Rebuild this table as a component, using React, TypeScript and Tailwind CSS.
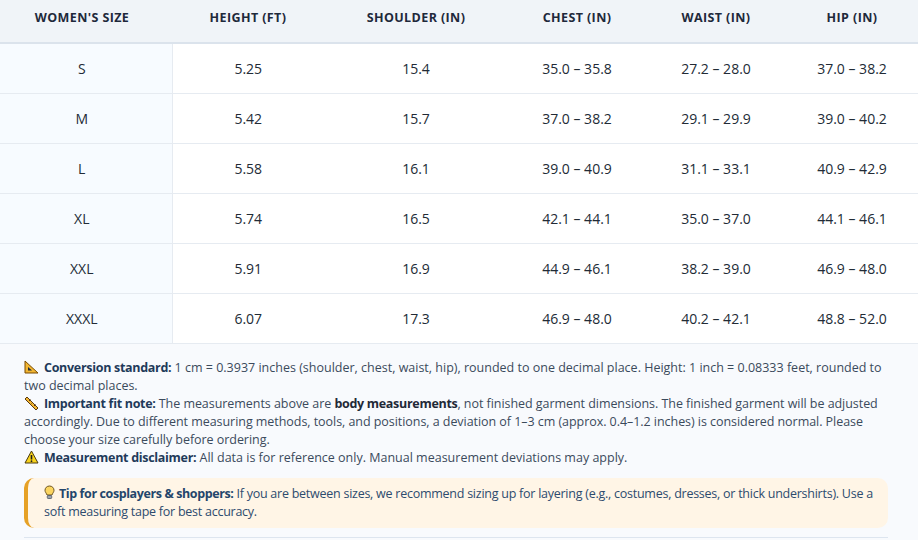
const columns = [
  { label: "Women's Size", width: "w-[172px]" },
  { label: "Height (ft)", width: "w-[152px]" },
  { label: "Shoulder (in)", width: "w-[184px]" },
  { label: "Chest (in)", width: "w-[138px]" },
  { label: "Waist (in)", width: "w-[140px]" },
  { label: "Hip (in)", width: "w-[132px]" },
];

const rows = [
  ["S", "5.25", "15.4", "35.0 – 35.8", "27.2 – 28.0", "37.0 – 38.2"],
  ["M", "5.42", "15.7", "37.0 – 38.2", "29.1 – 29.9", "39.0 – 40.2"],
  ["L", "5.58", "16.1", "39.0 – 40.9", "31.1 – 33.1", "40.9 – 42.9"],
  ["XL", "5.74", "16.5", "42.1 – 44.1", "35.0 – 37.0", "44.1 – 46.1"],
  ["XXL", "5.91", "16.9", "44.9 – 46.1", "38.2 – 39.0", "46.9 – 48.0"],
  ["XXXL", "6.07", "17.3", "46.9 – 48.0", "40.2 – 42.1", "48.8 – 52.0"],
];

const TriangleRuler = () => (
  <svg width="15" height="14" viewBox="0 0 15 14" className="inline-block align-[-2px] mr-[5px]">
    <path d="M1 1 L1 13 L14 13 Z" fill="#f2b632" stroke="#7a4b00" strokeWidth="1" />
    <path d="M4 7 L4 10.5 L8 10.5 Z" fill="#1e2a3a" />
  </svg>
);

const Ruler = () => (
  <svg width="15" height="14" viewBox="0 0 15 14" className="inline-block align-[-2px] mr-[5px]">
    <path d="M3 1 L14 12 L12 14 L1 3 Z" fill="#f2b632" stroke="#5a3a10" strokeWidth="1" />
    <path d="M5 5 L6.5 3.5 M7.5 7.5 L9 6 M10 10 L11.5 8.5" stroke="#5a3a10" strokeWidth="1" />
  </svg>
);

const Warning = () => (
  <svg width="15" height="14" viewBox="0 0 15 14" className="inline-block align-[-2px] mr-[5px]">
    <path d="M7.5 1 L14 13 L1 13 Z" fill="#f7d21c" stroke="#4a3a10" strokeWidth="1" strokeLinejoin="round" />
    <path d="M7.5 5 L7.5 9.5" stroke="#1e1e1e" strokeWidth="1.6" />
    <circle cx="7.5" cy="11.2" r="0.9" fill="#1e1e1e" />
  </svg>
);

const Bulb = () => (
  <svg width="11" height="15" viewBox="0 0 11 15" className="inline-block align-[-2px] mr-[4px]">
    <path d="M5.5 1 C2.8 1 1 3 1 5.3 C1 7.2 2.5 8.2 3 10 L8 10 C8.5 8.2 10 7.2 10 5.3 C10 3 8.2 1 5.5 1 Z" fill="#fbd560" stroke="#6b5320" strokeWidth="1" />
    <rect x="3.3" y="10.5" width="4.4" height="3" rx="0.8" fill="#9aa3ad" stroke="#4b5563" strokeWidth="0.8" />
  </svg>
);

export default function App() {
  return (
    <div className="w-[918px] h-[540px] overflow-hidden bg-white font-['Open_Sans',_'Noto_Sans',_sans-serif]">
      <table className="w-full table-fixed border-collapse">
        <colgroup>
          {columns.map((c) => (
            <col key={c.label} className={c.width} />
          ))}
        </colgroup>
        <thead>
          <tr className="h-[43px] bg-[#f0f4f8] border-b-2 border-[#dbe3ec]">
            {columns.map((c, i) => (
              <th
                key={c.label}
                className={`text-center align-middle pb-[5px] text-[12.5px] font-bold uppercase tracking-[0.4px] text-[#1e293b] ${
                  i === 0 ? "pr-2" : ""
                }`}
              >
                {c.label}
              </th>
            ))}
          </tr>
        </thead>
        <tbody>
          {rows.map((r) => (
            <tr key={r[0]} className="h-[50px] border-b border-[#e6ebf1]">
              {r.map((v, i) => (
                <td
                  key={i}
                  className={`text-center align-middle text-[14px] text-[#222b36] ${
                    i === 0 ? "pr-2 bg-[#f7fbff] border-r border-[#e6ebf1]" : ""
                  }`}
                >
                  {v}
                </td>
              ))}
            </tr>
          ))}
        </tbody>
      </table>

      <div className="bg-[#f8fafd] pl-6 pr-[30px] pt-[15px] h-full text-[12.5px] leading-[18px] text-[#3b4a5c]">
        <p className="-mr-1">
          <TriangleRuler />
          <b className="font-bold tracking-[-0.3px] text-[#1f3a5a]">Conversion standard:</b> 1 cm = 0.3937 inches (shoulder, chest, waist, hip), rounded to one decimal place. Height: 1 inch = 0.08333 feet, rounded to two decimal places.
        </p>
        <p className="-mr-1 tracking-[-0.05px]">
          <Ruler />
          <b className="font-bold tracking-[-0.3px] text-[#1f3a5a]">Important fit note:</b> The measurements above are{" "}
          <b className="font-bold tracking-[-0.3px] text-[#1f2937]">body measurements</b>, not finished garment dimensions. The finished garment will be adjusted accordingly. Due to different measuring methods, tools, and positions, a deviation of 1–3 cm (approx. 0.4–1.2 inches) is considered normal. Please choose your size carefully before ordering.
        </p>
        <p>
          <Warning />
          <b className="font-bold tracking-[-0.3px] text-[#1f3a5a]">Measurement disclaimer:</b> All data is for reference only. Manual measurement deviations may apply.
        </p>

        <div className="mt-[11px] rounded-[10px] border-l-4 border-[#e6a126] bg-[#fff5e6] pl-[16px] pr-2 py-[7px] tracking-[-0.25px] text-[#2d4b6e]">
          <Bulb />
          <b className="font-bold tracking-[-0.4px] text-[#23456b]">Tip for cosplayers &amp; shoppers:</b> If you are between sizes, we recommend sizing up for layering (e.g., costumes, dresses, or thick undershirts). Use a soft measuring tape for best accuracy.
        </div>
        <div className="mt-[9px] border-t border-[#dde5ef]" />
      </div>
    </div>
  );
}
